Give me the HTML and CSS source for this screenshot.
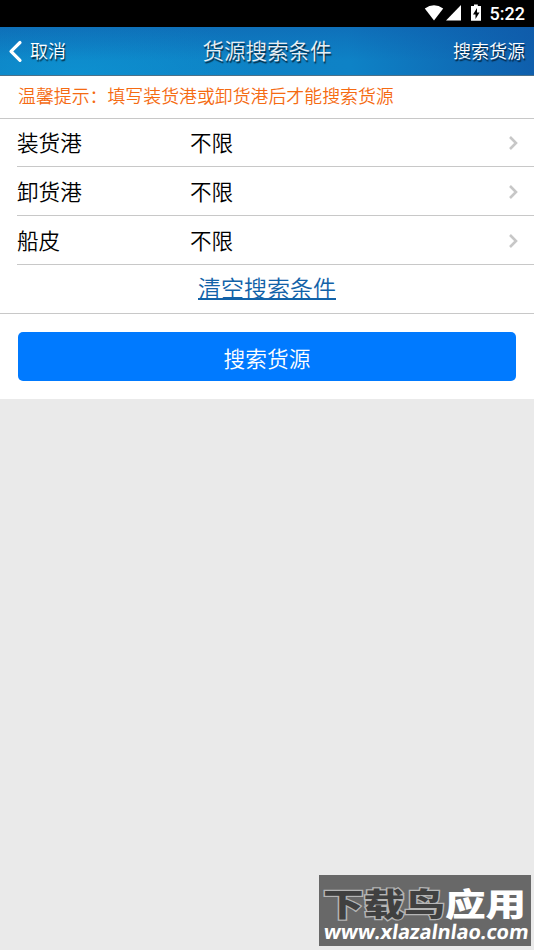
FILE: index.html
```html
<!DOCTYPE html>
<html lang="zh-CN">
<head>
<meta charset="utf-8">
<title>货源搜索条件</title>
<link rel="stylesheet" href="styles.css">
</head>
<body>
<div class="status">
  <svg class="status-icons" width="60" height="27" viewBox="0 0 60 27" fill="#fff">
    <path d="M.8 8.500Q10 1.800 19.200 8.500L10 20.500z"/>
    <path d="M37 5v15.500H22z"/>
    <path fill-rule="evenodd" d="M47 6h3V4.500h3.800V6H57v14.800H47zM53 8l-4 6.500h2.500V19l4-6.500H53z"/>
  </svg>
  <span class="clock">5:22</span>
</div>
<header class="bar">
  <div class="cancel">
    <svg width="16" height="26" viewBox="0 0 16 26" fill="none" stroke="#fff" stroke-width="3.200" stroke-linecap="round" stroke-linejoin="round"><path d="M12 4.500L3 13.300l9 9"/></svg>
    <span>取消</span>
  </div>
  <h1 class="title">货源搜索条件</h1>
  <div class="submit-top">搜索货源</div>
</header>
<main class="panel">
  <p class="hint">温馨提示：填写装货港或卸货港后才能搜索货源</p>
  <ul class="rows">
    <li class="row"><span class="label">装货港</span><span class="value">不限</span><svg class="chevron" width="12" height="16" viewBox="0 0 12 16"><path d="M2 2l6 6-6 6"/></svg></li>
    <li class="row"><span class="label">卸货港</span><span class="value">不限</span><svg class="chevron" width="12" height="16" viewBox="0 0 12 16"><path d="M2 2l6 6-6 6"/></svg></li>
    <li class="row"><span class="label">船皮</span><span class="value">不限</span><svg class="chevron" width="12" height="16" viewBox="0 0 12 16"><path d="M2 2l6 6-6 6"/></svg></li>
  </ul>
  <div class="clear"><a class="clear-link">清空搜索条件</a></div>
  <div class="action"><button class="search">搜索货源</button></div>
</main>
<div class="watermark">
  <div class="mark-name"><span class="mark-dark">下载鸟</span><span class="mark-light">应用</span></div>
  <div class="mark-url">www.xlazalnlao.com</div>
</div>
</body>
</html>
```
FILE: styles.css
```css
* { box-sizing: border-box; }
body {
  margin: 0;
  height: 950px;
  overflow: hidden;
  background: #eaeaea;
  color: #000;
  font-family: "Noto Sans CJK SC", sans-serif;
  font-weight: 350;
}
.status {
  height: 27px;
  background: #000;
  display: flex;
  justify-content: flex-end;
  padding-right: 9px;
}
.status-icons { margin-right: 6px; }
.clock {
  color: #fff;
  font: 500 18px/27px Roboto, sans-serif;
}
.bar {
  height: 49px;
  border-bottom: 1px solid #4d7188;
  background:
    linear-gradient(180deg, rgba(15, 90, 170, .45), rgba(15, 90, 170, 0) 70%),
    radial-gradient(ellipse 200px 65px at 75px 48px, rgba(13, 151, 213, .7), rgba(13, 151, 213, 0)),
    linear-gradient(80deg, #0e7fc2 0%, #0e82c6 65%, #0f5dab 100%);
  color: #fff;
  text-shadow: 1px 2px 1px rgba(0, 0, 0, .65);
  display: grid;
  grid-template-columns: 1fr auto 1fr;
  align-items: center;
  font-size: 18px;
  line-height: 46px;
}
.cancel {
  display: flex;
  align-items: center;
  padding-left: 8px;
  gap: 6px;
}
.cancel span,
.submit-top { padding-bottom: 2px; }
.title {
  margin: 0;
  height: 48px;
  font-size: 21.500px;
  line-height: 46px;
  font-weight: 350;
  color: #e9eef2;
}
.submit-top { text-align: right; padding-right: 9px; }
.panel { background: #fff; height: 323px; }
.hint {
  margin: 0;
  height: 43px;
  padding-left: 18px;
  border-bottom: 1px solid #c8c8c8;
  color: #f56b12;
  font-size: 17.900px;
  line-height: 38px;
}
.rows {
  list-style: none;
  margin: 0;
  padding: 0 0 0 17px;
}
.row {
  height: 49px;
  border-bottom: 1px solid #c8c8c8;
  display: flex;
  align-items: center;
  padding: 1px 14px 0 0;
  font-size: 21.600px;
  line-height: 44px;
}
.row:first-child { height: 48px; }
.label { width: 173px; padding-bottom: 2px; }
.value { flex: 1; padding-bottom: 2px; }
.chevron {
  fill: none;
  stroke: #c7c7c7;
  stroke-width: 2.600;
}
.clear {
  height: 49px;
  border-bottom: 1px solid #c8c8c8;
  text-align: center;
  line-height: 44px;
}
.clear-link {
  color: #1262a8;
  font-size: 23px;
  text-decoration: underline;
  text-decoration-thickness: 2px;
  text-decoration-skip-ink: none;
}
.action { padding: 18px 18px 0; }
.search {
  display: block;
  width: 100%;
  height: 49px;
  border: 0;
  border-radius: 5px;
  background: #007aff;
  color: #fff;
  font: 350 21.700px/47px "Noto Sans CJK SC", sans-serif;
  padding: 2px 0 0;
}
.watermark {
  position: absolute;
  left: 319px;
  top: 875px;
  width: 212px;
  height: 71px;
  background: #686868;
  padding: 8px 4px 0;
  white-space: nowrap;
}
.mark-name {
  width: 160px;
  height: 38px;
  font-size: 32px;
  line-height: 38px;
  font-weight: 900;
  display: flex;
  transform: scaleX(1.27);
  transform-origin: left center;
}
.mark-dark {
  color: #404040;
  -webkit-text-stroke: 2.400px #b5b5b5;
  paint-order: stroke fill;
}
.mark-light { color: #fff; }
.mark-url {
  width: 202px;
  color: #fff;
  font: 700 20px/22px "Open Sans", sans-serif;
  letter-spacing: -.1px;
  transform: skewX(-8deg);
  padding-left: 1px;
}
```
